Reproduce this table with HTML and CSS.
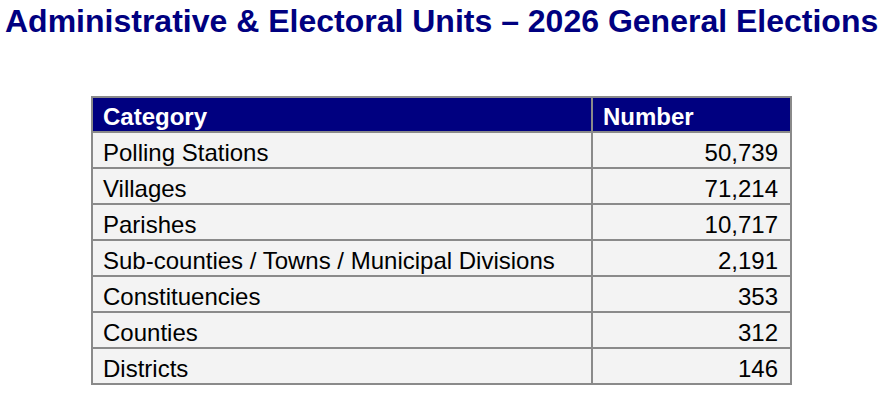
FILE: index.html
```html
<!DOCTYPE html>
<html>
<head>
<meta charset="utf-8">
<link rel="stylesheet" href="styles.css">
</head>
<body>
<h1 class="title">Administrative &amp; Electoral Units – 2026 General Elections</h1>
<table class="units">
  <thead>
    <tr><th class="cat">Category</th><th class="num">Number</th></tr>
  </thead>
  <tbody>
    <tr><td>Polling Stations</td><td class="n">50,739</td></tr>
    <tr><td>Villages</td><td class="n">71,214</td></tr>
    <tr><td>Parishes</td><td class="n">10,717</td></tr>
    <tr><td>Sub-counties / Towns / Municipal Divisions</td><td class="n">2,191</td></tr>
    <tr><td>Constituencies</td><td class="n">353</td></tr>
    <tr><td>Counties</td><td class="n">312</td></tr>
    <tr><td>Districts</td><td class="n">146</td></tr>
  </tbody>
</table>
</body>
</html>
```
FILE: styles.css
```css
html, body {
  margin: 0;
  padding: 0;
  background: #ffffff;
}
body {
  font-family: "Liberation Sans", Arial, sans-serif;
}
.title {
  margin: 0;
  padding: 3px 0 0 5px;
  font-size: 32px;
  line-height: 36px;
  font-weight: bold;
  color: #000080;
  white-space: nowrap;
}
.units {
  margin: 57px 0 0 91px;
  width: 701px;
  border-collapse: collapse;
  border: 2px solid #8a8a8a;
}
.units th, .units td {
  border: 2px solid #8a8a8a;
  padding: 0 12px 0 10px;
  font-size: 24px;
  line-height: 28px;
  text-align: left;
}
.units th {
  background: #000080;
  color: #ffffff;
  font-weight: bold;
  height: 27px;
  border-top: 0;
  padding-top: 5px;
  vertical-align: middle;
}
.units td {
  background: #f3f3f3;
  color: #000000;
  height: 29px;
  padding-top: 5px;
}
.units th.cat { width: 476px; }
.units td.n { text-align: right; }
```
